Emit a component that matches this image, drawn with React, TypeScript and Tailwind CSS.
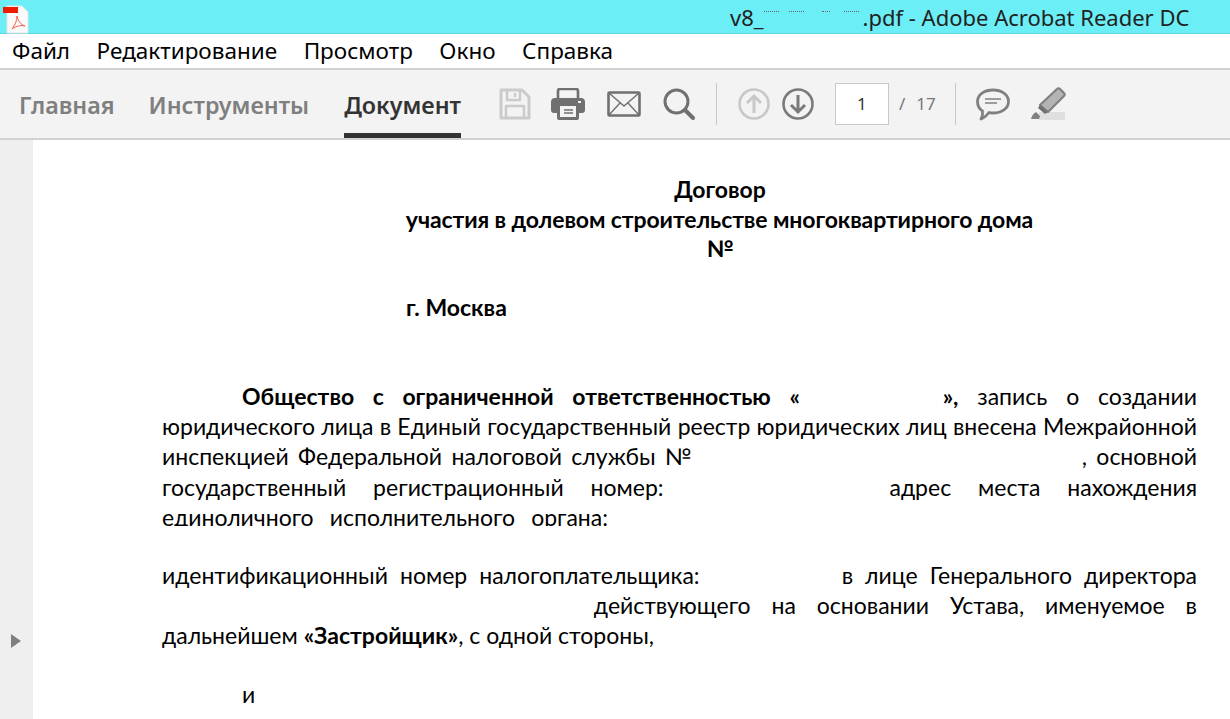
const menuItems = ["Файл", "Редактирование", "Просмотр", "Окно", "Справка"];

const PdfIcon = () => (
  <svg width="26" height="30" viewBox="0 0 26 30" className="mt-[5px] ml-[3px]">
    <path d="M4 1h15l6 6v21H4z" fill="#fafafa" stroke="#e4e4e4" />
    <rect x="0" y="2" width="15" height="6" fill="#ec1c00" />
    <path d="M14 11c1 5 3 8 8 10-4-1-9 0-13 3 3-4 5-8 5-13z" fill="none" stroke="#f0604c" strokeWidth="1" />
  </svg>
);

const SaveIcon = () => (
  <svg width="32" height="32" viewBox="0 0 32 32" fill="none" stroke="#cbcbcb" strokeWidth="3" strokeLinejoin="round">
    <path d="M2 2h21l7 7v21H2z" />
    <path d="M8 2v10h13V2M16 5v4" strokeWidth="2.5" />
    <path d="M7 30V18h18v12" strokeWidth="2.5" />
  </svg>
);

const PrintIcon = () => (
  <svg width="34" height="32" viewBox="0 0 34 32">
    <path d="M7 11V3a2 2 0 0 1 2-2h16a2 2 0 0 1 2 2v8" fill="none" stroke="#707070" strokeWidth="2.6" />
    <path d="M4 10h26a4 4 0 0 1 4 4v8a3 3 0 0 1-3 3h-3v5a2 2 0 0 1-2 2H8a2 2 0 0 1-2-2v-5H3a3 3 0 0 1-3-3v-8a4 4 0 0 1 4-4z" fill="#707070" />
    <rect x="9" y="18" width="16" height="11" fill="#f3f3f3" />
    <path d="M13 22h9M13 25h9" stroke="#707070" strokeWidth="1.5" />
    <rect x="27" y="13" width="3" height="2" fill="#f3f3f3" />
  </svg>
);

const MailIcon = () => (
  <svg width="34" height="26" viewBox="0 0 34 26" fill="none" stroke="#707070">
    <rect x="1.5" y="1.5" width="31" height="23" rx="1" strokeWidth="2.6" />
    <path d="M2 2l15 13L32 2M2 24l11-12M32 24L21 12" strokeWidth="1.4" />
  </svg>
);

const SearchIcon = () => (
  <svg width="32" height="32" viewBox="0 0 32 32" fill="none" stroke="#707070">
    <circle cx="13.5" cy="13.5" r="11.5" strokeWidth="3" />
    <path d="M22 22l8 8" strokeWidth="4" strokeLinecap="round" />
  </svg>
);

const ArrowCircle = ({ up, color }: { up?: boolean; color: string }) => (
  <svg width="32" height="32" viewBox="0 0 32 32" fill="none" stroke={color} strokeWidth="2.6">
    <circle cx="16" cy="16" r="14.5" />
    {up ? (
      <path d="M16 25V8M9 15l7-7 7 7" strokeWidth="3" />
    ) : (
      <path d="M16 7v17M9 17l7 7 7-7" strokeWidth="3" />
    )}
  </svg>
);

const CommentIcon = () => (
  <svg width="34" height="33" viewBox="0 0 34 33" fill="none" stroke="#808080">
    <path d="M17 2c8.500 0 15.500 4.500 15.500 11.500S25.500 25 17 25c-1.500 0-3 0-4-.5C11 27 8 30 5 31c1.500-2.500 2-5 1.500-8C3.500 21 1.500 17.500 1.500 13.500 1.500 6.500 8.500 2 17 2z" strokeWidth="2.800" strokeLinejoin="round" />
    <path d="M9 11h16M9 15h12" strokeWidth="1.500" />
  </svg>
);

const HighlightIcon = () => (
  <svg width="36" height="34" viewBox="0 0 36 34">
    <rect x="9" y="25" width="26" height="8" fill="#dfdfdf" />
    <path d="M30 2l4 4a2 2 0 0 1 0 3L18 25l-8-7L27 2a2 2 0 0 1 3 0z" fill="#b4b4b4" stroke="#808080" strokeWidth="2.2" strokeLinejoin="round" />
    <path d="M10 18l8 7-3 2-7-6z" fill="#707070" />
    <path d="M1 32c1-4 3-6 5-7l4 4-1 3z" fill="#808080" />
  </svg>
);

const Sep = () => <div className="h-[42px] w-px bg-[#c9c9c9]" />;

const Gap = ({ w }: { w: string }) => <span className={`inline-block ${w}`} />;

const Line = ({ children, last, tall }: { children: React.ReactNode; last?: boolean; tall?: boolean }) => (
  <p
    className={`whitespace-nowrap ${tall ? "h-[31px] leading-[31px]" : "h-[30px] leading-[30px]"} ${
      last ? "" : "text-justify [text-align-last:justify]"
    }`}
  >
    {children}
  </p>
);

const App = () => {
  return (
    <div className="flex h-[719px] w-[1230px] flex-col overflow-hidden bg-white font-['Noto_Sans',sans-serif]">
      {/* Title bar */}
      <div className="flex h-[34px] shrink-0 items-start border-b border-[#5fd5dc] bg-[#6beef5]">
        <PdfIcon />
        <span className="ml-[701px] mt-[2px] text-[22px] leading-[30px] text-[#222]">
          v8_
          {/* file name is blurred out, only some specks are left */}
          <span className="inline-flex w-[99px] [vertical-align:14px]">
            <span className="w-[15px] border-t border-dotted border-[#666]" />
            <span className="ml-[10px] w-[15px] border-t border-dotted border-[#666]" />
            <span className="ml-[18px] w-[8px] border-t border-dotted border-[#666]" />
            <span className="ml-[14px] w-[15px] border-t border-dotted border-[#666]" />
          </span>
          .pdf - Adobe Acrobat Reader DC
        </span>
      </div>

      {/* Menu */}
      <div className="flex h-[36px] shrink-0 items-center gap-[26.5px] border-b-2 border-[#d2d2d2] pl-[12px] text-[22.5px] text-black">
        {menuItems.map((item) => (
          <span key={item}>{item}</span>
        ))}
      </div>

      {/* Toolbar */}
      <div className="flex h-[70px] shrink-0 items-stretch border-b-2 border-[#d2d2d2] bg-[#f3f3f3] pl-[19px]">
        <div className="mr-[34px] flex items-center pt-[3px] text-[23.3px] font-semibold text-[#7f7f7f]">Главная</div>
        <div className="mr-[35px] flex items-center pt-[3px] text-[23.3px] font-semibold text-[#7f7f7f]">Инструменты</div>
        <div className="mr-[38px] flex items-center border-b-[5px] border-[#333] pt-[8px] text-[23.3px] font-semibold text-[#333]">Документ</div>

        <div className="flex items-center">
          <SaveIcon />
          <div className="ml-[20px]"><PrintIcon /></div>
          <div className="ml-[22px]"><MailIcon /></div>
          <div className="ml-[22px]"><SearchIcon /></div>
          <div className="ml-[21px]"><Sep /></div>
          <div className="ml-[21px]"><ArrowCircle up color="#c8c8c8" /></div>
          <div className="ml-[12px]"><ArrowCircle color="#7a7a7a" /></div>
          <div className="ml-[21px] flex h-[42px] w-[54px] items-center justify-center border border-[#c8c8c8] bg-white text-[17px] text-[#333]">1</div>
          <span className="ml-[10px] text-[17px] text-[#777]">/</span>
          <span className="ml-[11px] text-[17px] text-[#777]">17</span>
          <div className="ml-[19px]"><Sep /></div>
          <div className="ml-[20px]"><CommentIcon /></div>
          <div className="ml-[20px]"><HighlightIcon /></div>
        </div>
      </div>

      {/* Body */}
      <div className="flex min-h-0 flex-1">
        <div className="flex w-[33px] shrink-0 items-start bg-[#efefef] pl-[11px] pt-[494px]">
          <div className="h-0 w-0 border-y-[7px] border-l-[10px] border-y-transparent border-l-[#808080]" />
        </div>

        <div className="flex-1 pl-[129px] pr-[33px] pt-[34px] font-['Lato','Noto_Sans',sans-serif] text-[23px] text-black">
          <div className="w-[1035px]">
            <div className="font-bold">
              <p className="h-[30px] pl-[81px] text-center leading-[30px]">Договор</p>
              <p className="h-[30px] pl-[80px] text-center leading-[30px] tracking-[-0.1px]">участия в долевом строительстве многоквартирного дома</p>
              <p className="h-[29px] pl-[81px] text-center leading-[29px]">№</p>
              <p className="mt-[29px] h-[30px] pl-[244px] leading-[30px]">г. Москва</p>
            </div>

            <div className="mt-[59px]">
              <Line>
                <Gap w="w-[80px]" />
                <b>Общество с ограниченной ответственностью «</b> <Gap w="w-[105px]" /> <b>»,</b> запись о создании
              </Line>
              <Line>юридического лица в Единый государственный реестр юридических лиц внесена Межрайонной</Line>
              <Line tall>
                инспекцией Федеральной налоговой службы № <Gap w="w-[368px]" /> , основной
              </Line>
              <Line>
                государственный регистрационный номер: <Gap w="w-[172px]" /> адрес места нахождения
              </Line>
              {/* bottom of this line is cut off in the picture */}
              <div className="h-[24px] overflow-hidden">
                <Line>единоличного  исполнительного  органа:<Gap w="w-[589px]" /></Line>
              </div>
            </div>

            <div className="mt-[34px]">
              <Line>
                идентификационный номер налогоплательщика: <Gap w="w-[118px]" /> в лице Генерального директора
              </Line>
              <Line>
                <Gap w="w-[411px]" /> действующего на основании Устава, именуемое в
              </Line>
              <Line last>
                дальнейшем <b>«Застройщик»</b>, с одной стороны,
              </Line>
            </div>

            <p className="mt-[29px] h-[30px] pl-[80px] leading-[30px]">и</p>
          </div>
        </div>
      </div>
    </div>
  );
};

export default App;
